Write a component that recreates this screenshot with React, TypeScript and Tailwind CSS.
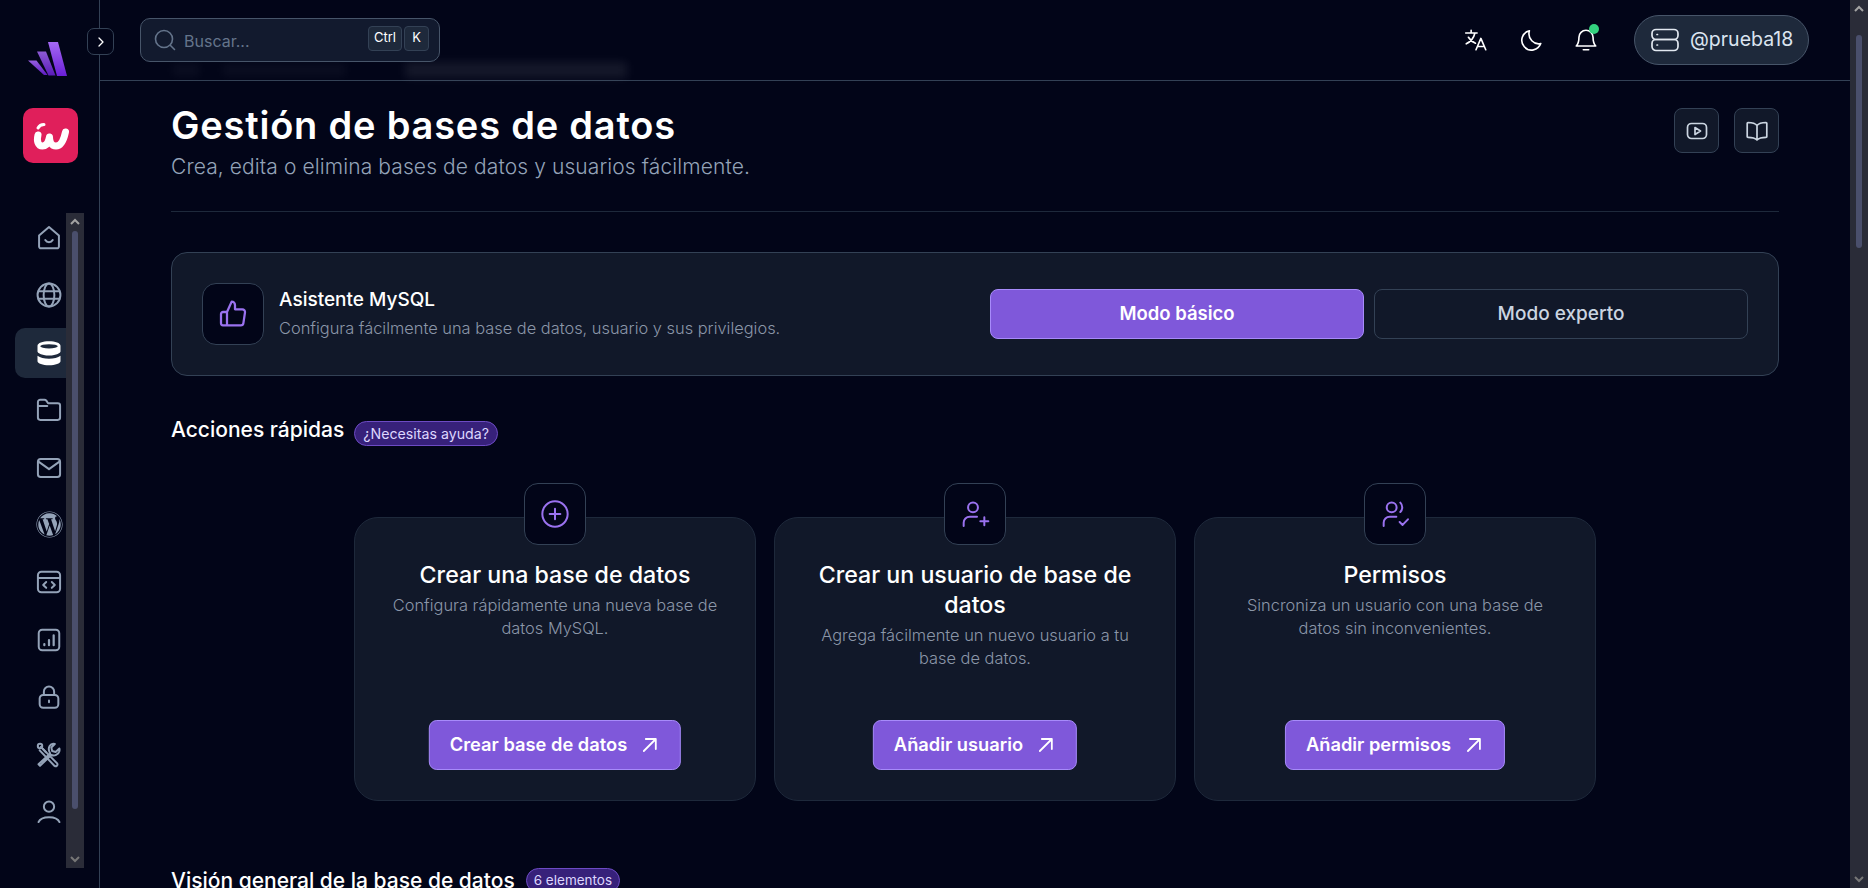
import React from "react";
import { FaWordpress } from "react-icons/fa";

const sans = "font-['Inter',sans-serif]";

type P = { className?: string };
const Ico = ({ className = "", children, size = 28, sw = 1.7 }: P & { children: React.ReactNode; size?: number; sw?: number }) => (
  <svg width={size} height={size} viewBox="0 0 24 24" fill="none" stroke="currentColor" strokeWidth={sw} strokeLinecap="round" strokeLinejoin="round" className={className}>
    {children}
  </svg>
);

const navIcons: React.ReactNode[] = [
  <Ico key="home"><path d="M3.500 9.800 12 2.600l8.500 7.200v9.400a1.600 1.600 0 0 1-1.600 1.600H5.100a1.600 1.600 0 0 1-1.600-1.600z" /><path d="M8.800 13.800c1.400 2.400 5 2.400 6.400 0" /></Ico>,
  <Ico key="globe"><circle cx="12" cy="12" r="9.800" /><ellipse cx="12" cy="12" rx="4.600" ry="9.800" /><path d="M3 8.800h18M3 15.200h18" /></Ico>,
  <svg key="db" width="30" height="30" viewBox="0 0 24 24" fill="#fff"><path d="M2.800 6.200C2.800 3.800 7 2.500 12 2.500s9.200 1.300 9.200 3.700v4.600c0 1-3 3.200-9.200 3.200s-9.200-2.200-9.200-3.200z" /><path d="M2.800 14.200c2 1.600 5.400 2.400 9.200 2.400s7.200-.8 9.200-2.400v4.400c0 1.800-4.200 3.200-9.200 3.200s-9.200-1.400-9.200-3.200z" /><ellipse cx="12" cy="6.600" rx="7" ry="1.700" fill="#1e293b" /></svg>,
  <Ico key="folder"><path d="M2.500 5.200a2 2 0 0 1 2-2h3.600c.7 0 1.200.3 1.600.8l1.500 2.200h8.300a2 2 0 0 1 2 2v10.300a2 2 0 0 1-2 2h-15a2 2 0 0 1-2-2z" /><path d="M2.500 8.500h8" /></Ico>,
  <Ico key="mail"><rect x="2.500" y="4.200" width="19" height="15.600" rx="2.400" /><path d="m3 6.500 9 6.500 9-6.500" /></Ico>,
  <FaWordpress key="wp" size={27} />,
  <Ico key="code"><rect x="2.500" y="3.200" width="19" height="17.600" rx="3" /><path d="M2.500 8.500h19M9.600 12l-2.600 2.500 2.600 2.500M14.400 12l2.600 2.500-2.600 2.500" /></Ico>,
  <Ico key="chart"><rect x="3.200" y="3.200" width="17.600" height="17.600" rx="3" /><path d="M8 16.500v-1M12 16.500v-4.500M16 16.500V8" strokeWidth="1.900" /></Ico>,
  <Ico key="lock"><rect x="4" y="10.200" width="16" height="11" rx="3" /><path d="M7.600 10.200V7.400a4.400 4.400 0 0 1 8.800 0v2.800M12 15v1.400" /></Ico>,
  <Ico key="tools"><path d="m5 5 14 14.200a1.600 1.600 0 0 1-2.200 2.200L4 8" /><circle cx="4.300" cy="4.300" r="1.900" /><path d="M6.600 6.600 9.400 9.600M13 10.800l-10 9.200 1.300 1.300 9.600-9.300c2.800 1.200 6.200-.4 7-3.300.2-.8.2-1.600 0-2.300l-3.200 3-3-.8-.7-3 3-3c-3.600-1-7 2.800-4 8.200z" /></Ico>,
  <Ico key="user"><circle cx="12" cy="7.400" r="4.400" /><path d="M3 20.600c2.400-5.600 15.600-5.600 18 0" /></Ico>,
];

const ArrowUpRight = () => (
  <svg width="20" height="20" viewBox="0 0 20 20" fill="none" stroke="currentColor" strokeWidth="1.800" strokeLinecap="round" strokeLinejoin="round">
    <path d="M4 16 16 4M6 4h10v10" />
  </svg>
);

const cards = [
  {
    icon: (
      <Ico size={32} sw={1.5} className="text-[#9a72ef]"><circle cx="12" cy="12" r="9.500" /><path d="M12 8v8M8 12h8" /></Ico>
    ),
    title: "Crear una base de datos",
    desc: "Configura rápidamente una nueva base de datos MySQL.",
    btn: "Crear base de datos",
  },
  {
    icon: (
      <Ico size={32} sw={1.5} className="text-[#9a72ef]"><circle cx="10.500" cy="7" r="3.700" /><path d="M3.500 21v-2.500a4.500 4.500 0 0 1 4.500-4.500h5.500M16 17.500h6M19 14.500v6" /></Ico>
    ),
    title: "Crear un usuario de base de datos",
    desc: "Agrega fácilmente un nuevo usuario a tu base de datos.",
    btn: "Añadir usuario",
  },
  {
    icon: (
      <Ico size={32} sw={1.5} className="text-[#9a72ef]"><circle cx="9.500" cy="7" r="3.700" /><path d="M16 3.500c1.900 1.900 1.900 5.100 0 7M3.500 21v-2.500a4.500 4.500 0 0 1 4.500-4.500h5M15.500 18l2.200 2.200 4-4.200" /></Ico>
    ),
    title: "Permisos",
    desc: "Sincroniza un usuario con una base de datos sin inconvenientes.",
    btn: "Añadir permisos",
  },
];

const ScrollArrow = ({ down = false }: { down?: boolean }) => (
  <svg width="10" height="8" viewBox="0 0 10 8" fill="none" stroke={down ? "#777" : "#a3a3a3"} strokeWidth="2" className={down ? "rotate-180" : ""}>
    <path d="M1 6 5 2l4 4" />
  </svg>
);

const Scrollbar = ({ className = "", thumb }: { className?: string; thumb: string }) => (
  <div className={`w-[18px] shrink-0 bg-[#2a2c38] flex flex-col items-center ${className}`}>
    <div className="h-[18px] flex items-center justify-center shrink-0"><ScrollArrow /></div>
    <div className={`w-[6px] rounded-full bg-[#4a4f6c] shrink-0 ${thumb}`} />
    <div className="flex-1" />
    <div className="h-[18px] flex items-center justify-center shrink-0"><ScrollArrow down /></div>
  </div>
);

export default function App() {
  return (
    <div className={`${sans} h-screen w-full overflow-hidden flex bg-[#020518] text-white relative`}>
      {/* Sidebar */}
      <aside className="w-[100px] shrink-0 border-r border-[#334155] flex flex-col">
        <svg width="42" height="36" viewBox="0 0 42 36" className="ml-[27px] mt-[41px] shrink-0">
          <defs>
            <linearGradient id="lg" x1="0" y1="0" x2="0" y2="1">
              <stop offset="0" stopColor="#a569f5" />
              <stop offset="1" stopColor="#6a1fd6" />
            </linearGradient>
          </defs>
          <path d="M21 1h10l9 34H30z" fill="url(#lg)" />
          <path d="M10 10.500h9l9.500 24h-7z" fill="url(#lg)" opacity=".85" />
          <path d="M1 19.500h8.500l11 14.500h-3.500z" fill="url(#lg)" opacity=".9" />
        </svg>
        <div className="ml-[23px] mt-[31px] w-[55px] h-[55px] rounded-[10px] bg-[#e01f5b] flex items-center justify-center shrink-0">
          <svg width="38" height="30" viewBox="0 0 38 30" fill="none" stroke="#fff" strokeWidth="7" strokeLinecap="round" strokeLinejoin="round">
            <path d="M6 14c-1.500 6 0 11 4.500 11s6-4 7-9c0 5 2 9 6.500 9 5 0 8-7 9.500-14" />
            <path d="M6 7c1-2 3-3.500 6-3.500" strokeWidth="3" />
          </svg>
        </div>
        <div className="mt-[50px] ml-[15px] flex h-[655px]">
          <nav className="w-[51px] flex flex-col gap-[7.4px]">
            {navIcons.map((ic, i) => (
              <div
                key={i}
                className={`h-[50px] w-[51px] shrink-0 flex items-center justify-center pl-[17px] rounded-l-[10px] ${
                  i === 2 ? "bg-[#1e293b] text-white" : "text-[#94a3b8]"
                }`}
              >
                {ic}
              </div>
            ))}
          </nav>
          <Scrollbar className="h-[655px]" thumb="h-[578px]" />
        </div>
      </aside>

      {/* Toggle */}
      <button className="absolute left-[87px] top-[28px] w-[27px] h-[27px] rounded-[7px] border border-[#334155] bg-[#020518] flex items-center justify-center text-white">
        <svg width="12" height="12" viewBox="0 0 12 12" fill="none" stroke="currentColor" strokeWidth="1.300" strokeLinecap="round" strokeLinejoin="round"><path d="m4 2 4 4-4 4" /></svg>
      </button>

      {/* Main */}
      <div className="flex-1 min-w-0 flex flex-col">
        <header className="relative h-[81px] shrink-0 border-b border-[#334155] pl-[40px] pr-[41px] flex items-center justify-between">
          <div className="absolute left-[72px] top-[64px] w-[28px] h-[12px] bg-white/[0.04] blur-[5px]" />
          <div className="absolute left-[122px] top-[64px] w-[124px] h-[12px] bg-white/[0.04] blur-[5px]" />
          <div className="absolute left-[305px] top-[62px] w-[222px] h-[16px] bg-white/[0.08] blur-[5px]" />
          <div className="relative w-[300px] h-[44px] rounded-[10px] border border-[#475569] bg-[#121a2e] flex items-center pl-[12px] pr-[10px] -mt-[1px]">
            <svg width="24" height="24" viewBox="0 0 24 24" fill="none" stroke="#64748b" strokeWidth="1.600" strokeLinecap="round"><circle cx="11" cy="11" r="8.500" /><path d="m17.500 17.500 4 4" /></svg>
            <span className="ml-[7px] text-[16px] text-[#64748b] flex-1 mt-[3px]">Buscar...</span>
            <kbd className="h-[25px] px-[5px] rounded-[4px] border border-[#334155] bg-[#1e293b] text-[13px] text-white flex items-center font-['Inter',sans-serif] -mt-[3px]">Ctrl</kbd>
            <kbd className="ml-[2px] h-[25px] w-[25px] rounded-[4px] border border-[#334155] bg-[#1e293b] text-[13px] text-white flex items-center justify-center font-['Inter',sans-serif] -mt-[3px]">K</kbd>
          </div>
          <div className="relative flex items-center -mt-[1px]">
            <Ico size={26} sw={1.5} className="text-white"><path d="M2.500 5.500h10.500M7.500 3v2.500M11 5.500c-1 4.500-4 8-8 10M5 9.500c1.500 2.500 4 4.500 6.500 5.500" /><path d="m12 21 4.500-10.500L21 21M13.500 18h6" /></Ico>
            <Ico size={26} sw={1.5} className="text-white ml-[29px]"><path d="M10.500 3.500a9 9 0 1 0 10.500 11.800c-6 1.500-12.500-4.500-10.500-11.800z" /></Ico>
            <div className="relative ml-[29px]">
              <Ico size={26} sw={1.5} className="text-white"><path d="M12 3a6.500 6.500 0 0 0-6.500 6.500c0 4-1 6.500-2.500 8h18c-1.500-1.500-2.500-4-2.500-8A6.500 6.500 0 0 0 12 3z" /><path d="M9.500 21h5" /></Ico>
              <span className="absolute top-[-3px] right-[0px] w-[10px] h-[10px] rounded-full bg-[#34d27f]" />
            </div>
            <div className="ml-[35px] w-[175px] h-[50px] rounded-full border border-[#475569] bg-[#1e293b] flex items-center pl-[16px]">
              <svg width="28" height="24" viewBox="0 0 28 24" fill="none" stroke="#e2e8f0" strokeWidth="1.700" strokeLinecap="round"><rect x="1" y="1.500" width="26" height="10" rx="4" /><rect x="1" y="11.500" width="26" height="11" rx="4" /><path d="M6 6.500h.5M6 17h.5" /></svg>
              <span className="ml-[11px] text-[19.5px] text-[#dbe4f0] whitespace-nowrap">@prueba18</span>
            </div>
          </div>
        </header>

        <main className="flex-1 min-h-0 overflow-hidden px-[71px]">
          <div className="flex justify-between mt-[20px]">
            <div>
              <h1 className="text-[38px] leading-[48px] font-semibold tracking-[0.8px]">Gestión de bases de datos</h1>
              <p className="mt-[3px] text-[21px] leading-[30px] text-[#94a3b8] font-light tracking-[0.1px]">Crea, edita o elimina bases de datos y usuarios fácilmente.</p>
            </div>
            <div className="flex gap-[15px] mt-[7px]">
              <button className="w-[45px] h-[45px] rounded-[8px] border border-[#334155] bg-[#111829] flex items-center justify-center text-[#cbd5e1]">
                <Ico size={24}><rect x="2.500" y="4.500" width="19" height="15" rx="4" /><path d="m10 8.500 5.500 3.500-5.500 3.500z" /></Ico>
              </button>
              <button className="w-[45px] h-[45px] rounded-[8px] border border-[#334155] bg-[#111829] flex items-center justify-center text-[#cbd5e1]">
                <Ico size={24}><path d="M12 6.500C10.500 4.500 7 3.500 3 3.500a.8.8 0 0 0-.8.8v13.200a.8.8 0 0 0 .8.8c4 0 7 .6 9 2.700 2-2.100 5-2.700 9-2.700a.8.8 0 0 0 .8-.8V4.300a.8.8 0 0 0-.8-.8c-4 0-7.500 1-9 3zM12 6.500v14" /></Ico>
              </button>
            </div>
          </div>
          <div className="mt-[29px] h-px bg-[#1e293b]" />

          <section className="mt-[40px] h-[124px] rounded-[16px] border border-[#334155] bg-[#111829] flex items-center pl-[30px] pr-[30px]">
            <div className="w-[62px] h-[62px] rounded-[14px] border border-[#334155] bg-[#020518] flex items-center justify-center text-[#9a72ef] shrink-0">
              <Ico size={32}><path d="M7.500 10.500v10H4.500a1.500 1.500 0 0 1-1.500-1.500v-7a1.500 1.500 0 0 1 1.500-1.500zM7.500 10.500l3.500-7.800a2.500 2.500 0 0 1 2.500 2.500v3.300h5.500a2 2 0 0 1 2 2.300l-1.200 8a2 2 0 0 1-2 1.700H7.500" /></Ico>
            </div>
            <div className="ml-[15px] flex-1 -mt-[1px]">
              <div className="text-[19px] leading-[26px] font-medium">Asistente MySQL</div>
              <div className="mt-[2px] text-[16.4px] leading-[26px] text-[#8b96a8] font-light">Configura fácilmente una base de datos, usuario y sus privilegios.</div>
            </div>
            <button className="w-[374px] h-[50px] rounded-[8px] border border-[#a78bfa] bg-[#7f58da] text-[18.5px] font-semibold">Modo básico</button>
            <button className="ml-[10px] w-[374px] h-[50px] rounded-[8px] border border-[#334155] bg-[#111829] text-[19px] font-medium text-[#cbd5e1]">Modo experto</button>
          </section>

          <div className="mt-[45px] flex items-center h-[25px]">
            <h2 className="text-[21px] font-medium -mt-[7px]">Acciones rápidas</h2>
            <span className="ml-[10px] h-[25px] px-[8px] rounded-full border border-[#6d4bc4] bg-[#37217a] text-[14.2px] text-[#ddd6fe] flex items-center whitespace-nowrap">¿Necesitas ayuda?</span>
          </div>

          <div className="mt-[37px] flex justify-center gap-[18px]">
            {cards.map((c) => (
              <div key={c.btn} className="relative mt-[34px] w-[402px] h-[284px] rounded-[24px] border border-[#1e293b] bg-[#111829] px-[30px] pt-[42px] text-center flex flex-col items-center">
                <div className="absolute left-1/2 -translate-x-1/2 -top-[35px] w-[62px] h-[62px] rounded-[14px] border border-[#334155] bg-[#020518] flex items-center justify-center">{c.icon}</div>
                <h3 className="text-[23.2px] leading-[30px] font-medium w-[330px]">{c.title}</h3>
                <p className="mt-[4px] text-[16.4px] leading-[23px] text-[#8b96a8] font-light w-[335px]">{c.desc}</p>
                <button className="absolute bottom-[30px] left-1/2 -translate-x-1/2 h-[50px] px-[20px] rounded-[8px] border border-[#a78bfa] bg-[#7f58da] text-[18.3px] font-semibold flex items-center gap-[13px] whitespace-nowrap">
                  {c.btn}
                  <ArrowUpRight />
                </button>
              </div>
            ))}
          </div>

          <div className="mt-[67px] flex items-start h-[25px]">
            <h2 className="text-[21px] leading-[25px] font-medium">Visión general de la base de datos</h2>
            <span className="ml-[11px] h-[25px] px-[7px] rounded-full border border-[#6d4bc4] bg-[#37217a] text-[13.5px] text-[#ddd6fe] flex items-center whitespace-nowrap">6 elementos</span>
          </div>
        </main>
      </div>

      <Scrollbar className="h-full" thumb="mt-[17px] h-[213px]" />
    </div>
  );
}
